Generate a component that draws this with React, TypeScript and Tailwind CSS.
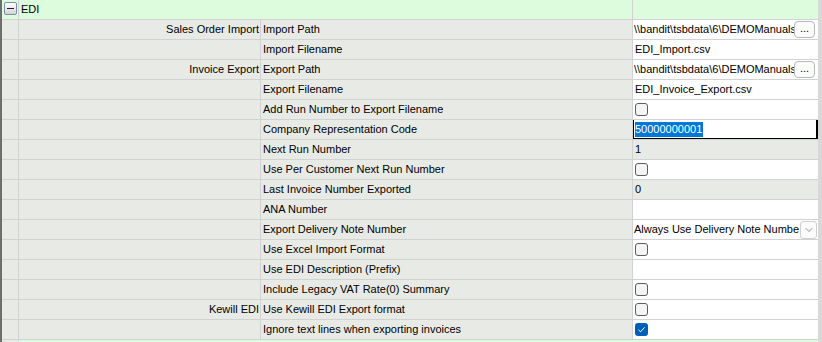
import { ChevronDown } from "lucide-react";

type Kind = "text" | "path" | "check" | "checked" | "readonly" | "select" | "selected" | "empty";

interface Row {
  group?: string;
  label: string;
  kind: Kind;
  value?: string;
}

const rows: Row[] = [
  { group: "Sales Order Import", label: "Import Path", kind: "path", value: "\\\\bandit\\tsbdata\\6\\DEMOManuals" },
  { label: "Import Filename", kind: "text", value: "EDI_Import.csv" },
  { group: "Invoice Export", label: "Export Path", kind: "path", value: "\\\\bandit\\tsbdata\\6\\DEMOManuals" },
  { label: "Export Filename", kind: "text", value: "EDI_Invoice_Export.csv" },
  { label: "Add Run Number to Export Filename", kind: "check" },
  { label: "Company Representation Code", kind: "selected", value: "50000000001" },
  { label: "Next Run Number", kind: "readonly", value: "1" },
  { label: "Use Per Customer Next Run Number", kind: "check" },
  { label: "Last Invoice Number Exported", kind: "readonly", value: "0" },
  { label: "ANA Number", kind: "empty" },
  { label: "Export Delivery Note Number", kind: "select", value: "Always Use Delivery Note Numbe" },
  { label: "Use Excel Import Format", kind: "check" },
  { label: "Use EDI Description (Prefix)", kind: "empty" },
  { label: "Include Legacy VAT Rate(0) Summary", kind: "check" },
  { group: "Kewill EDI", label: "Use Kewill EDI Export format", kind: "check" },
  { label: "Ignore text lines when exporting invoices", kind: "checked" },
];

const CheckBox = ({ checked }: { checked?: boolean }) =>
  checked ? (
    <span className="w-[13px] h-[13px] rounded-[3px] bg-[#005fb8] flex items-center justify-center">
      <svg width="9" height="9" viewBox="0 0 9 9">
        <path d="M1.5 4.8 L3.6 6.8 L7.5 2.4" fill="none" stroke="white" strokeWidth="1" />
      </svg>
    </span>
  ) : (
    <span className="w-[13px] h-[13px] rounded-[3px] border border-[#5c5c5c] bg-[#f4f4f4]" />
  );

const ValueCell = ({ row }: { row: Row }) => {
  const base = "flex-1 h-full flex items-center overflow-hidden whitespace-nowrap relative";
  switch (row.kind) {
    case "path":
      return (
        <div className={`${base} bg-white pl-[1px] pr-[3px]`}>
          <span className="flex-1 min-w-0 overflow-hidden">{row.value}</span>
          <span className="w-[21px] h-[17px] rounded-[4px] border border-[#b9b9b9] bg-[#fbfbfb] flex items-center justify-center text-[11px] leading-none pb-[3px] shrink-0">
            ...
          </span>
        </div>
      );
    case "text":
      return <div className={`${base} bg-white pl-[2px]`}>{row.value}</div>;
    case "readonly":
      return <div className={`${base} bg-[#e8eae6] pl-[2px]`}>{row.value}</div>;
    case "check":
    case "checked":
      return (
        <div className={`${base} bg-white pl-[2px]`}>
          <CheckBox checked={row.kind === "checked"} />
        </div>
      );
    case "select":
      return (
        <div className={`${base} bg-white pl-[1px] pr-[1px]`}>
          <span className="flex-1 min-w-0 overflow-hidden">{row.value}</span>
          <span className="w-[17px] h-[18px] rounded-[3px] border border-[#cfcfcf] bg-[#fbfbfb] flex items-center justify-center shrink-0">
            <ChevronDown size={12} strokeWidth={1.2} className="text-[#444]" />
          </span>
        </div>
      );
    case "selected":
      return (
        <div className={`${base} bg-white pl-[2px]`}>
          <span className="bg-[#0078d7] text-white leading-[15px] pr-[1px]">{row.value}</span>
          <span className="absolute -left-px -top-[2px] -bottom-px right-0 border-2 border-black" />
        </div>
      );
    default:
      return <div className={`${base} bg-white`} />;
  }
};

export default function App() {
  return (
    <div
      className="w-[822px] h-[342px] overflow-hidden bg-[#e8eae6] border-l-2 border-l-[#6e6e6e] border-r-4 border-r-[#d8d8d8] text-[11px] text-black"
      style={{ fontFamily: '"Liberation Sans", Arial, sans-serif' }}
    >
      <div className="h-[20px] flex border-b border-[#d2d2d2] bg-[#ddfcdd]">
        <div className="w-[17px] h-full border-r border-[#d2d2d2] flex items-center justify-center pb-[2px]">
          <span className="w-[13px] h-[13px] rounded-[2px] border border-[#7c8ea5] bg-gradient-to-b from-[#ffffff] to-[#d4d4d4] flex items-center justify-center">
            <span className="w-[7px] h-px bg-[#222]" />
          </span>
        </div>
        <div className="w-[614px] h-full border-r border-[#d2d2d2] flex items-center pl-[2px]">EDI</div>
        <div className="flex-1" />
      </div>
      {rows.map((row) => (
        <div key={row.label} className="h-[20px] flex border-b border-[#d2d2d2]">
          <div className="w-[17px] h-full border-r border-[#d2d2d2]" />
          <div className="w-[242px] h-full border-r border-[#d2d2d2] flex items-center justify-end pr-[1px] whitespace-nowrap">
            {row.group}
          </div>
          <div className="w-[372px] h-full border-r border-[#d2d2d2] flex items-center pl-[2px] whitespace-nowrap">
            {row.label}
          </div>
          <ValueCell row={row} />
        </div>
      ))}
      <div className="h-[20px] flex">
        <div className="w-[17px] h-full border-r border-[#d2d2d2]" />
        <div className="flex-1 bg-[#ddfcdd]" />
      </div>
    </div>
  );
}
